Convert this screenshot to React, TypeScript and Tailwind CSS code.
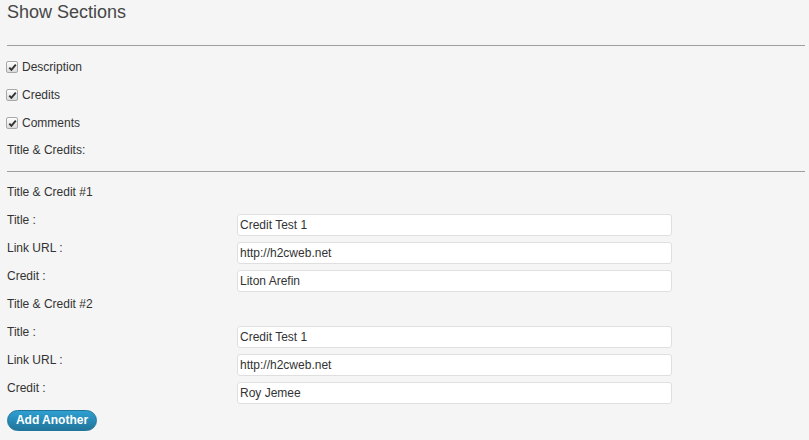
import React from "react";

type Credit = { title: string; url: string; credit: string };

const credits: Credit[] = [
    { title: "Credit Test 1", url: "http://h2cweb.net", credit: "Liton Arefin" },
    { title: "Credit Test 1", url: "http://h2cweb.net", credit: "Roy Jemee" },
];

const Check = ({ label }: { label: string }) => (
    <div className="h-[28px] flex items-center">
        <span className="w-[12px] h-[12px] ml-[-1px] border border-[#a8a8a8] rounded-[2px] bg-gradient-to-b from-[#fdfdfd] to-[#dcdcdc] flex items-center justify-center">
            <svg width="9" height="9" viewBox="0 0 9 9">
                <path d="M1.3 4.6 L3.4 6.9 L7.8 1.6" fill="none" stroke="#333" strokeWidth="1.9" />
            </svg>
        </span>
        <span className="ml-[4px]">{label}</span>
    </div>
);

const Field = ({ label, value }: { label: string; value: string }) => (
    <div className="flex items-start">
        <div className="w-[230px] -mt-[1px] leading-[14px]">{label}</div>
        <input
            readOnly
            value={value}
            className="w-[435px] h-[22px] px-[2px] bg-white border border-[#dfdfdf] rounded-[3px] text-[12px] text-[#333] outline-none font-['Liberation_Sans',Arial,sans-serif]"
        />
    </div>
);

export default function App() {
    return (
        <div className="w-[809px] h-[440px] bg-[#f5f5f5] text-[#333] text-[12px] font-['Liberation_Sans',Arial,sans-serif] pl-[7px] pr-[4px] overflow-hidden">
            <h2 className="text-[18px] leading-[24px] text-[#464646]">Show Sections</h2>
            <div className="mt-[21px] h-px bg-[#9e9e9e]" />
            <div className="mt-[7px]">
                <Check label="Description" />
                <Check label="Credits" />
                <Check label="Comments" />
            </div>
            <div className="h-[26px] leading-[26px]">Title &amp; Credits:</div>
            <div className="mt-[8px] h-px bg-[#9e9e9e]" />
            <div className="mt-[8px]">
                {credits.map((c, i) => (
                    <div key={i}>
                        <div className="h-[24px] leading-[24px]">Title &amp; Credit #{i + 1}</div>
                        <div className="pt-[10px] flex flex-col gap-[6px]">
                            <Field label="Title :" value={c.title} />
                            <Field label="Link URL :" value={c.url} />
                            <Field label="Credit :" value={c.credit} />
                        </div>
                    </div>
                ))}
            </div>
            <button className="mt-[6px] w-[90px] h-[21px] rounded-full border border-[#21759b] bg-gradient-to-b from-[#2e9fd2] to-[#21759b] text-white font-bold text-[12px] leading-[19px] font-['Liberation_Sans',Arial,sans-serif]">
                Add Another
            </button>
        </div>
    );
}
